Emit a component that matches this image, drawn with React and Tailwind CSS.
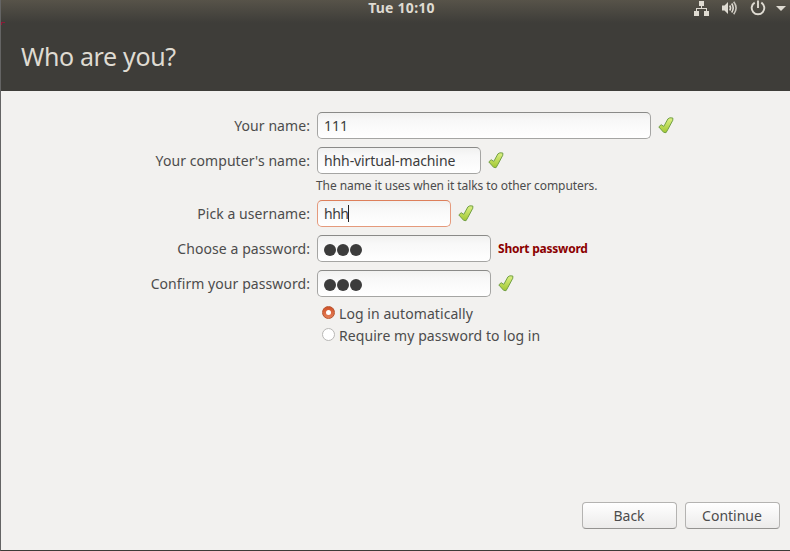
import React, { useState } from "react";

const inputBase =
  "flex h-[27px] items-center rounded-[5px] border bg-linear-to-b from-[#f1f1f0] via-[#f8f8f8] via-30% to-white px-[6px] text-[#3c3c3c]";

function CheckMark() {
  return (
    <svg width="18" height="17" viewBox="0 0 18 17" className="shrink-0">
      <defs>
        <linearGradient id="tick" x1="0" y1="0" x2="0" y2="1">
          <stop offset="0" stopColor="#dcf084" />
          <stop offset="1" stopColor="#a2c832" />
        </linearGradient>
      </defs>
      <path
        d="M1.800 9.900L4.200 7.700L6.800 9.400L10.900 1.900L12.900 0.800L15.800 1L15.800 3.200L11 12.200L9 15.700L6.600 15.300Z"
        fill="url(#tick)"
        stroke="#73a045"
        strokeWidth="1"
        strokeLinejoin="round"
      />
    </svg>
  );
}

function NetworkIcon() {
  return (
    <svg width="16" height="16" viewBox="0 0 16 16" fill="#dfdbd2">
      <path d="M5 1h5v5h-5zM0 11h5v5h-5zM10 11h5v5h-5z" />
      <path d="M7 6h1v2h5v3h-1V9h-9v2h-1V8h5z" />
    </svg>
  );
}

function VolumeIcon() {
  return (
    <svg width="16" height="16" viewBox="0 0 16 16" fill="none">
      <path d="M0 5.500h2.500L6 2v12L2.500 10.500H0z" fill="#dfdbd2" />
      <g stroke="#dfdbd2" strokeWidth="1.600">
        <path d="M7.700 5.500Q9.400 8 7.700 10.500" />
        <path d="M9.700 3.500Q12.700 8 9.700 12.500" />
        <path d="M11.700 1.700Q16.500 8 11.700 14.300" stroke="#c9c5bd" />
      </g>
    </svg>
  );
}

function PowerIcon() {
  return (
    <svg width="16" height="16" viewBox="0 0 16 16" fill="none" stroke="#dfdbd2">
      <path d="M4.700 2.600A6.300 6.300 0 1 0 11.300 2.600" strokeWidth="1.900" />
      <path d="M8 0.500V8" strokeWidth="1.900" />
    </svg>
  );
}

function TopBar() {
  return (
    <div className="grid h-[22px] grid-cols-[1fr_auto_1fr] items-start pl-[12px]">
      <span />
      <span className="h-4 text-[14px] leading-4 font-bold tracking-[0.25px] text-[#dfdbd2]">
        Tue 10:10
      </span>
      <div className="flex justify-end pr-[4px]">
        <NetworkIcon />
        <div className="ml-3">
          <VolumeIcon />
        </div>
        <div className="ml-3">
          <PowerIcon />
        </div>
        <svg width="10" height="16" viewBox="0 0 10 16" className="ml-[10px]">
          <path d="M0 6h10L5 11z" fill="#dfdbd2" />
        </svg>
      </div>
    </div>
  );
}

function Row({ label, children }) {
  return (
    <div className="flex h-[27px] items-center">
      <div className="flex w-[309px] shrink-0 justify-end whitespace-nowrap tracking-[0.07px]">
        {label}
      </div>
      <div className="ml-[7px] flex items-center gap-[6px]">{children}</div>
    </div>
  );
}

function Password({ value }) {
  return (
    <div className={`${inputBase} w-[174px] gap-px border-[#a5a5a3] border-t-[#8a8a88]`}>
      {value.split("").map((_, i) => (
        <span key={i} className="mt-[3px] h-3 w-3 rounded-full bg-[#3c3c3c]" />
      ))}
    </div>
  );
}

function Radio({ checked, onClick, children }) {
  return (
    <button
      type="button"
      onClick={onClick}
      className="flex h-[22px] items-center gap-1 text-left tracking-[0.07px]"
    >
      {checked ? (
        <span className="mb-px flex h-[13px] w-[13px] items-center justify-center rounded-full border border-[#b9552e] bg-linear-to-b from-[#cf5128] to-[#e58058]">
          <span className="h-[5px] w-[5px] rounded-full bg-white" />
        </span>
      ) : (
        <span className="mb-px h-[13px] w-[13px] rounded-full border border-[#b8b7b5] bg-white" />
      )}
      <span>{children}</span>
    </button>
  );
}

function NavButton({ children }) {
  return (
    <button
      type="button"
      className="h-[27px] w-[95px] rounded-[4px] border border-[#b4b3b1] border-b-[#949391] bg-linear-to-b from-white to-[#ecebea] pr-px leading-[25px]"
    >
      {children}
    </button>
  );
}

function App() {
  const [autoLogin, setAutoLogin] = useState(true);

  return (
    <div className="flex h-[551px] w-[790px] flex-col overflow-hidden border-b border-l border-b-[#3c3b37] border-l-[#646464] bg-[#f2f1ef] font-['Noto_Sans','Open_Sans',sans-serif] text-[14px] text-[#4c4c4c]">
      <header className="relative h-[91px] shrink-0 bg-linear-to-b from-[#575349] to-[#3e3d39] to-25%">
        <TopBar />
        {/* small red corner under the top bar */}
        <span className="absolute top-[22px] left-0 h-[3px] w-1 border-t border-l border-[#8f1836]" />
        <h1 className="pt-4 pl-[20px] text-[25px] leading-9 tracking-[-0.35px] text-[#dfdbd2]">
          Who are you?
        </h1>
      </header>

      <main className="flex flex-1 flex-col pt-[21px]">
        <Row label="Your name:">
          <div className={`${inputBase} w-[334px] border-[#a5a5a3] border-t-[#8a8a88]`}>111</div>
          <CheckMark />
        </Row>
        <div className="h-2" />
        <Row label="Your computer's name:">
          <div
            className={`${inputBase} w-[164px] border-[#a5a5a3] border-t-[#8a8a88] tracking-[-0.1px] whitespace-nowrap`}
          >
            hhh-virtual-machine
          </div>
          <CheckMark />
        </Row>
        <p className="h-[26px] pl-[315px] text-[12px] leading-[23px] tracking-[-0.08px]">
          The name it uses when it talks to other computers.
        </p>
        <Row label="Pick a username:">
          <div className={`${inputBase} w-[134px] border-[#e59a7c] border-t-[#dd7f5b]`}>
            <span className="tracking-[-0.5px]">hhh</span>
            <span className="h-[17px] w-px bg-[#222]" />
          </div>
          <CheckMark />
        </Row>
        <div className="h-2" />
        <Row label="Choose a password:">
          <Password value="hhh" />
          <span className="pl-px text-[12px] font-bold tracking-[-0.23px] text-[#8b0000]">
            Short password
          </span>
        </Row>
        <div className="h-2" />
        <Row label="Confirm your password:">
          <Password value="hhh" />
          <CheckMark />
        </Row>
        <div className="mt-[5px] flex flex-col items-start pl-[321px]">
          <Radio checked={autoLogin} onClick={() => setAutoLogin(true)}>
            Log in automatically
          </Radio>
          <Radio checked={!autoLogin} onClick={() => setAutoLogin(false)}>
            Require my password to log in
          </Radio>
        </div>
        <div className="mt-auto mb-[21px] flex justify-end gap-2 pr-[10px]">
          <NavButton>Back</NavButton>
          <NavButton>Continue</NavButton>
        </div>
      </main>
    </div>
  );
}

export default App;
